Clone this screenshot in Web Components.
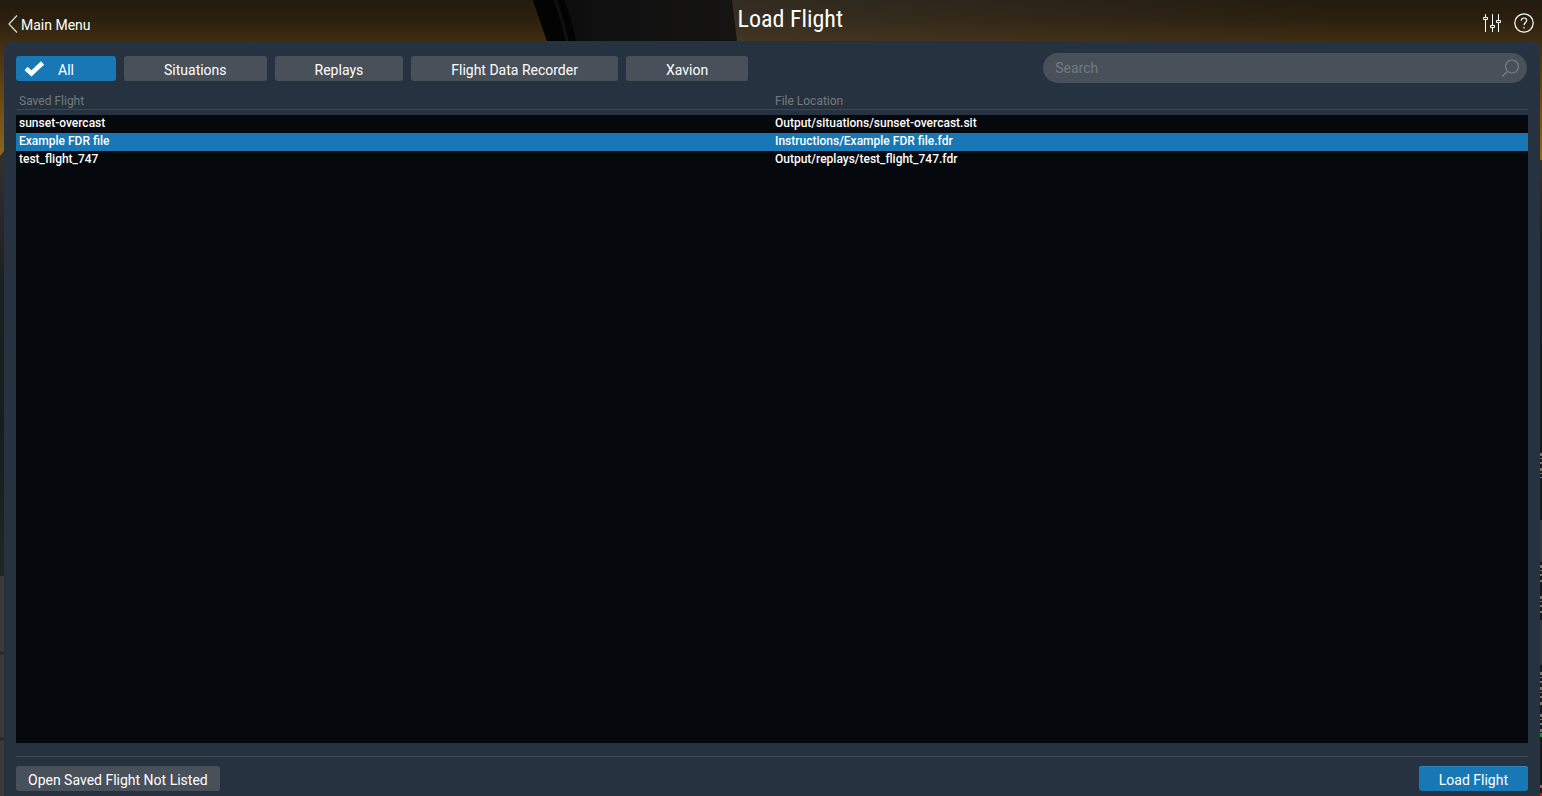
<!DOCTYPE html>
<html lang="en">
<head>
<meta charset="utf-8">
<meta name="viewport" content="width=device-width, initial-scale=1">
<title>Load Flight</title>
<style>
html {
    height: 100%;
}
body {
    --panel: #26323f;
    --control: #48505a;
    --accent: #1778b5;
    --line: #3d4753;
    --muted: #737a81;
    height: 100%;
    margin: 0;
    overflow: hidden;
    background: #24262a;
    color: #fff;
    font: 14px/16px Roboto, "Liberation Sans", sans-serif;
}
</style>
</head>
<body>
<load-flight-screen></load-flight-screen>

<script>
function createTemplate(html) {
    const template = document.createElement('template');
    template.innerHTML = html;
    return template;
}

class BaseElement extends HTMLElement {
    constructor() {
        super();
        this.attachShadow({ mode: 'open' });
        this.shadowRoot.appendChild(this.constructor.template.content.cloneNode(true));
    }
}

// Evening sky, window frame and apron lights behind the panel
class CabinScene extends BaseElement {
    static template = createTemplate(`
<style>
:host {
    display: block;
    overflow: hidden;
}
svg {
    display: block;
    width: 100%;
    height: 100%;
}
</style>
<svg viewBox="0 0 1542 796" preserveAspectRatio="none" aria-hidden="true">
    <defs>
        <linearGradient id="sky" x1="0" y1="0" x2="0" y2="1">
            <stop offset="0" stop-color="#231b0d"/>
            <stop offset=".12" stop-color="#2b200f"/>
            <stop offset=".26" stop-color="#402d10"/>
            <stop offset="1" stop-color="#94691a"/>
        </linearGradient>
        <linearGradient id="haze">
            <stop offset="0" stop-color="#46413a" stop-opacity=".45"/>
            <stop offset="1" stop-color="#46413a" stop-opacity="0"/>
        </linearGradient>
        <linearGradient id="land" x1="0" y1="0" x2="0" y2="1">
            <stop offset="0" stop-color="#34312d"/>
            <stop offset=".3" stop-color="#1d2022"/>
            <stop offset=".65" stop-color="#171d1e"/>
            <stop offset="1" stop-color="#202525"/>
        </linearGradient>
        <linearGradient id="frame">
            <stop offset="0" stop-color="#090a09"/>
            <stop offset=".4" stop-color="#111"/>
            <stop offset="1" stop-color="#151412"/>
        </linearGradient>
    </defs>
    <rect width="1542" height="162" fill="url(#sky)"/>
    <rect x="732" width="600" height="41" fill="url(#haze)"/>
    <path d="M533 0H732L737 41H547Z" fill="url(#frame)"/>
    <path d="M533 0H564Q572 20 576 41H547Z" fill="#020302"/>
    <path d="M555 0Q563 20 567 41" fill="none" stroke="#101010" stroke-width="3"/>
    <path d="M0 156L4 151V576H0Z" fill="url(#land)"/>
    <path d="M0 576H4V796H0Z" fill="#3a3a3c"/>
    <path d="M0 653H4M0 739H4" stroke="#26272a" stroke-width="3"/>
    <path d="M1538 160H1542V430H1538Z" fill="url(#land)"/>
    <path d="M1538 345H1542V796H1538Z" fill="#17191a"/>
    <path d="M1540 520H1542V562H1540ZM1540 620H1542V665H1540Z" fill="#35373a"/>
    <path d="M1541 453V478M1541 565V582M1541 596V613M1541 672V707M1541 714V738M1541 785V790" stroke="#77736a" stroke-width="2" stroke-dasharray="3 2 1 3 2 4"/>
    <path d="M1541 733V737" stroke="#159524" stroke-width="2"/>
    <path d="M1541 793V796" stroke="#c01818" stroke-width="2"/>
</svg>
`);
}

class ScreenHeader extends BaseElement {
    static template = createTemplate(`
<style>
:host {
    display: block;
}
header {
    display: flex;
    align-items: center;
    height: 41px;
    padding: 0 8px;
    box-sizing: border-box;
}
a {
    display: flex;
    align-items: center;
    gap: 3px;
    margin-right: 8px;
    padding-top: 8px;
    color: inherit;
    text-decoration: none;
}
h1 {
    flex: 1;
    margin: 0;
    padding-bottom: 4px;
    font: 400 24px/28px "Roboto Condensed", Roboto, sans-serif;
    text-align: center;
}
.tools {
    display: flex;
    gap: 12px;
    padding-top: 5px;
}
button {
    display: block;
    padding: 0;
    border: 0;
    background: none;
    color: inherit;
    cursor: pointer;
}
svg {
    display: block;
    fill: none;
    stroke: currentColor;
}
</style>
<header>
    <a href="#main-menu">
        <svg width="10" height="20" viewBox="0 0 10 20" aria-hidden="true"><path d="M9 .5L1 9L9 17.5" stroke-width="1.2" opacity=".85"/></svg>
        <slot name="back"></slot>
    </a>
    <h1><slot></slot></h1>
    <div class="tools">
        <button type="button" aria-label="Settings">
            <svg width="20" height="20" viewBox="0 0 20 20"><path d="M3.5 1V4M3.5 7V19M10.500 1V12M10.500 15V19M16.500 1V7M16.500 10V19"/><path d="M1.500 4.500H5.500V6.500H1.500ZM8.500 12.500H12.500V14.500H8.500ZM14.500 7.500H18.500V9.500H14.500Z"/></svg>
        </button>
        <button type="button" aria-label="Help">
            <svg width="20" height="20" viewBox="0 0 20 20"><circle cx="10" cy="10" r="9.2" stroke-width="1.2"/><path d="M7.300 7.800C7.300 5.900 8.400 5 10 5S12.700 5.900 12.700 7.400C12.700 9.500 10 9.600 10 12.300M10 14V15.500" stroke-width="1.2"/></svg>
        </button>
    </div>
</header>
`);
}

class SimButton extends BaseElement {
    static template = createTemplate(`
<style>
:host {
    display: block;
    --pad: 12px;
}
:host([kind="filter"]) {
    --pad: 40px;
}
:host([kind="primary"]) {
    --pad: 20px;
}
button {
    display: block;
    position: relative;
    height: 25px;
    padding: 3px var(--pad) 0;
    border: 0;
    border-radius: 3px;
    background: var(--control);
    color: inherit;
    font: inherit;
    white-space: nowrap;
    cursor: pointer;
}
:host([kind="filter"]) button {
    min-width: 100px;
}
:host([kind="primary"]) button,
:host([selected]) button {
    background: var(--accent);
}
:host([kind="primary"]) button {
    box-shadow: inset 0 1px #3187bd;
}
svg {
    display: none;
    position: absolute;
    left: 8px;
    top: 5px;
}
:host([selected]) svg {
    display: block;
}
</style>
<button type="button">
    <svg width="20" height="16" viewBox="0 0 20 16" aria-hidden="true"><path d="M2 7.500L7.500 12.500L18.500 2" fill="none" stroke="#fff" stroke-width="4.500"/></svg>
    <slot></slot>
</button>
`);

    static get observedAttributes() {
        return ['selected'];
    }

    attributeChangedCallback() {
        this.shadowRoot.querySelector('button').setAttribute('aria-pressed', this.hasAttribute('selected'));
    }
}

class FilterBar extends BaseElement {
    static template = createTemplate(`
<style>
:host {
    display: flex;
    gap: 8px;
}
</style>
<slot></slot>
`);

    connectedCallback() {
        this.addEventListener('click', (event) => {
            const picked = event.target.closest('sim-button');
            if (!picked) return;
            this.querySelectorAll('sim-button').forEach((button) => {
                button.toggleAttribute('selected', button === picked);
            });
        });
    }
}

class SearchBox extends BaseElement {
    static template = createTemplate(`
<style>
:host {
    display: block;
}
label {
    display: flex;
    align-items: center;
    height: 30px;
    padding: 0 8px 0 12px;
    border-radius: 15px;
    background: var(--control);
}
input {
    flex: 1;
    min-width: 0;
    padding: 0;
    border: 0;
    outline: 0;
    background: none;
    color: inherit;
    font: inherit;
}
input::placeholder {
    color: var(--muted);
    opacity: 1;
}
svg {
    fill: none;
    stroke: #7a8188;
}
</style>
<label>
    <input type="text" placeholder="Search" aria-label="Search">
    <svg width="18" height="18" viewBox="0 0 18 18" aria-hidden="true"><circle cx="11" cy="7.500" r="6.500" stroke-width="1.2"/><path d="M6.500 12.500L1 17.500" stroke-width="1.2"/></svg>
</label>
`);
}

class FlightList extends BaseElement {
    static template = createTemplate(`
<style>
:host {
    display: block;
    overflow: auto;
    background: #05080c;
}
table {
    width: 100%;
    border-collapse: collapse;
    table-layout: fixed;
    font-size: 12px;
    line-height: 16px;
    text-align: left;
}
th {
    padding: 0 0 5px;
    background: var(--panel);
    color: var(--muted);
    font-weight: 400;
}
th span {
    display: block;
    padding: 0 3px;
    border-bottom: 1px solid var(--line);
}
td {
    height: 16px;
    padding: 0 3px 2px;
    font-weight: 500;
}
tbody tr {
    cursor: default;
}
tr[aria-selected="true"] {
    background: var(--accent);
}
</style>
<table>
    <thead>
        <tr><th scope="col"><span>Saved Flight</span></th><th scope="col"><span>File Location</span></th></tr>
    </thead>
    <tbody></tbody>
</table>
`);

    connectedCallback() {
        this.$body = this.shadowRoot.querySelector('tbody');
        this.$body.addEventListener('click', (event) => {
            this.select(event.target.closest('tr'));
        });
        this.render();
    }

    set flights(value) {
        this._flights = value;
        if (this.$body) this.render();
    }

    select(row) {
        for (const tr of this.$body.rows) {
            tr.setAttribute('aria-selected', tr === row);
        }
    }

    render() {
        this.$body.replaceChildren();
        (this._flights || []).forEach((flight) => {
            const row = this.$body.insertRow();
            row.insertCell().textContent = flight.name;
            row.insertCell().textContent = flight.path;
        });
        this.select(this.$body.rows[1]);
    }
}

class LoadFlightScreen extends BaseElement {
    static template = createTemplate(`
<style>
:host {
    display: flex;
    flex-direction: column;
    position: relative;
    height: 100%;
}
cabin-scene {
    position: absolute;
    inset: 0;
    z-index: -1;
}
main {
    flex: 1;
    min-height: 0;
    display: flex;
    flex-direction: column;
    margin: 0 2px 0 4px;
    padding: 12px 12px 5px;
    border-radius: 8px 8px 0 0;
    background: var(--panel);
}
.toolbar {
    display: flex;
    align-items: center;
    justify-content: space-between;
    margin-bottom: 10px;
}
search-box {
    width: 32%;
    margin-right: 1px;
}
flight-list {
    flex: 1;
    min-height: 0;
}
footer {
    display: flex;
    justify-content: space-between;
    margin-top: 13px;
    padding-top: 9px;
    border-top: 1px solid var(--line);
}
</style>
<cabin-scene></cabin-scene>
<screen-header><span slot="back">Main Menu</span>Load Flight</screen-header>
<main>
    <div class="toolbar">
        <filter-bar>
            <sim-button kind="filter" selected>All</sim-button>
            <sim-button kind="filter">Situations</sim-button>
            <sim-button kind="filter">Replays</sim-button>
            <sim-button kind="filter">Flight Data Recorder</sim-button>
            <sim-button kind="filter">Xavion</sim-button>
        </filter-bar>
        <search-box></search-box>
    </div>
    <flight-list></flight-list>
    <footer>
        <sim-button>Open Saved Flight Not Listed</sim-button>
        <sim-button kind="primary">Load Flight</sim-button>
    </footer>
</main>
`);

    connectedCallback() {
        this.shadowRoot.querySelector('flight-list').flights = [
            { name: 'sunset-overcast', path: 'Output/situations/sunset-overcast.sit' },
            { name: 'Example FDR file', path: 'Instructions/Example FDR file.fdr' },
            { name: 'test_flight_747', path: 'Output/replays/test_flight_747.fdr' },
        ];
    }
}

window.customElements.define('cabin-scene', CabinScene);
window.customElements.define('screen-header', ScreenHeader);
window.customElements.define('sim-button', SimButton);
window.customElements.define('filter-bar', FilterBar);
window.customElements.define('search-box', SearchBox);
window.customElements.define('flight-list', FlightList);
window.customElements.define('load-flight-screen', LoadFlightScreen);
</script>
</body>
</html>
